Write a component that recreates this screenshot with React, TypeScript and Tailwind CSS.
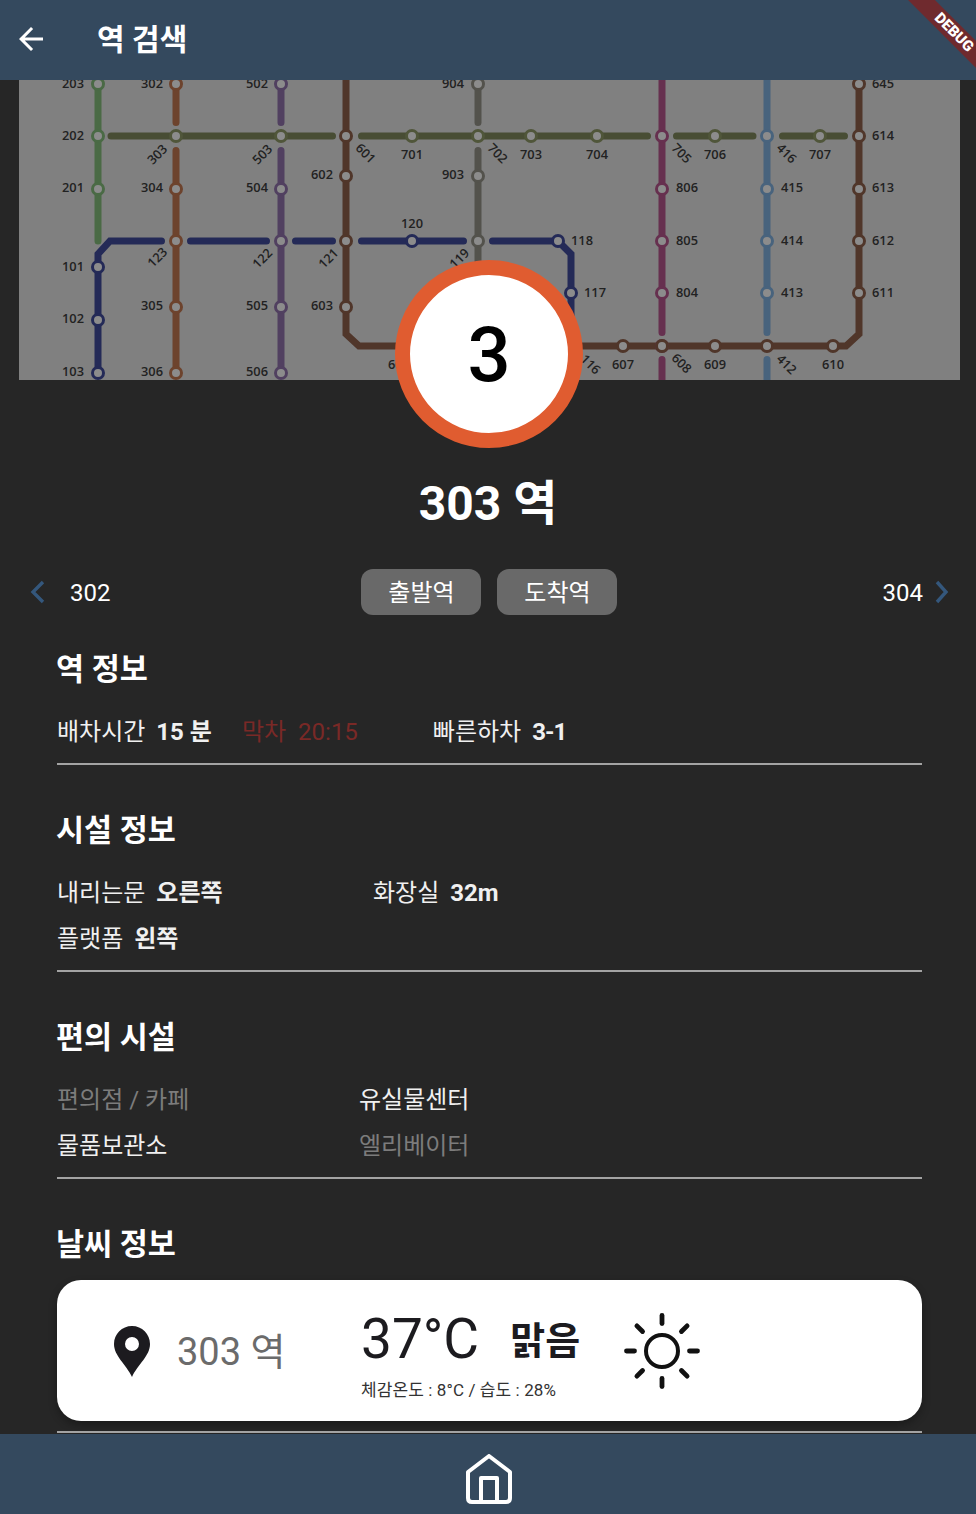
const FONT = 'font-["Roboto","Noto_Sans_CJK_KR",sans-serif]';

type Station = { x: number; y: number; c: string };
type Label = { x: number; y: number; t: string; rot?: number };

const C = {
  green: '#4a6a45',
  olive: '#484d34',
  oliveDot: '#50563a',
  orange: '#6d432d',
  purple: '#514060',
  brown: '#50362a',
  navy: '#242a57',
  gray: '#53524c',
  magenta: '#66304f',
  blue: '#48637d',
};

const segments: { d: string; c: string }[] = [
  { d: 'M98 76V241', c: C.green },
  { d: 'M176 76V122.500M176 150.500V373', c: C.orange },
  { d: 'M281 76V122.500M281 150.500V373', c: C.purple },
  { d: 'M478 76V122.500M478 150.500V300', c: C.gray },
  { d: 'M662 76V332.500M662 359.500V384', c: C.magenta },
  { d: 'M767 76V332.500M767 359.500V384', c: C.blue },
  { d: 'M346 76V334L359 346H846L859 334V76', c: C.brown },
  { d: 'M111 136H332.500M361.500 136H647.500M676.500 136H753M782.500 136H844.500', c: C.olive },
  { d: 'M98 373V254L110 241H161.500M190.500 241H266.500M295.500 241H332.500M361.500 241H463.500M492.500 241H558L571 254V320', c: C.navy },
];

const stations: Station[] = [
  ...[84, 136, 189].map((y) => ({ x: 98, y, c: C.green })),
  ...[267, 320, 373].map((y) => ({ x: 98, y, c: C.navy })),
  ...[84, 189, 241, 307, 373].map((y) => ({ x: 176, y, c: C.orange })),
  { x: 176, y: 136, c: C.oliveDot },
  ...[84, 189, 241, 307, 373].map((y) => ({ x: 281, y, c: C.purple })),
  { x: 281, y: 136, c: C.oliveDot },
  ...[136, 176, 241, 307].map((y) => ({ x: 346, y, c: C.brown })),
  ...[412, 531, 597, 715, 820].map((x) => ({ x, y: 136, c: C.oliveDot })),
  { x: 478, y: 136, c: C.oliveDot },
  ...[84, 176, 241].map((y) => ({ x: 478, y, c: C.gray })),
  { x: 412, y: 241, c: C.navy },
  { x: 558, y: 241, c: C.navy },
  { x: 571, y: 293, c: C.navy },
  ...[136, 189, 241, 293, 346].map((y) => ({ x: 662, y, c: C.magenta })),
  ...[136, 189, 241, 293].map((y) => ({ x: 767, y, c: C.blue })),
  ...[623, 767, 715, 833, 662].map((x) => ({ x, y: 346, c: C.brown })),
  ...[84, 136, 189, 241, 293].map((y) => ({ x: 859, y, c: C.brown })),
];

const labels: Label[] = [
  { x: 73, y: 83, t: '203' }, { x: 73, y: 135, t: '202' }, { x: 73, y: 187, t: '201' },
  { x: 73, y: 266, t: '101' }, { x: 73, y: 318, t: '102' }, { x: 73, y: 371, t: '103' },
  { x: 152, y: 83, t: '302' }, { x: 152, y: 187, t: '304' }, { x: 152, y: 305, t: '305' }, { x: 152, y: 371, t: '306' },
  { x: 257, y: 83, t: '502' }, { x: 257, y: 187, t: '504' }, { x: 257, y: 305, t: '505' }, { x: 257, y: 371, t: '506' },
  { x: 322, y: 174, t: '602' }, { x: 322, y: 305, t: '603' },
  { x: 453, y: 83, t: '904' }, { x: 453, y: 174, t: '903' },
  { x: 412, y: 154, t: '701' }, { x: 531, y: 154, t: '703' }, { x: 597, y: 154, t: '704' },
  { x: 715, y: 154, t: '706' }, { x: 820, y: 154, t: '707' },
  { x: 412, y: 223, t: '120' },
  { x: 582, y: 240, t: '118' }, { x: 595, y: 292, t: '117' },
  { x: 687, y: 187, t: '806' }, { x: 687, y: 240, t: '805' }, { x: 687, y: 292, t: '804' },
  { x: 792, y: 187, t: '415' }, { x: 792, y: 240, t: '414' }, { x: 792, y: 292, t: '413' },
  { x: 883, y: 83, t: '645' }, { x: 883, y: 135, t: '614' }, { x: 883, y: 187, t: '613' },
  { x: 883, y: 240, t: '612' }, { x: 883, y: 292, t: '611' },
  { x: 623, y: 364, t: '607' }, { x: 715, y: 364, t: '609' }, { x: 833, y: 364, t: '610' },
  { x: 157, y: 154, t: '303', rot: -45 }, { x: 262, y: 154, t: '503', rot: -45 },
  { x: 157, y: 257, t: '123', rot: -45 }, { x: 262, y: 258, t: '122', rot: -45 },
  { x: 328, y: 258, t: '121', rot: -45 }, { x: 459, y: 258, t: '119', rot: -45 },
  { x: 366, y: 153, t: '601', rot: 45 }, { x: 498, y: 153, t: '702', rot: 45 },
  { x: 682, y: 153, t: '705', rot: 45 }, { x: 787, y: 153, t: '416', rot: 45 },
  { x: 682, y: 363, t: '608', rot: 45 }, { x: 787, y: 364, t: '412', rot: 45 },
  { x: 591, y: 364, t: '116', rot: 45 },
  { x: 399, y: 364, t: '606' },
];

function SubwayMap() {
  return (
    <svg viewBox="19 80 941 300" className="block w-[941px] h-[300px]">
      <rect x="19" y="80" width="941" height="300" fill="#808080" />
      {segments.map((s, i) => (
        <path key={i} d={s.d} fill="none" stroke={s.c} strokeWidth="7" strokeLinecap="round" strokeLinejoin="miter" />
      ))}
      {stations.map((s, i) => (
        <circle key={i} cx={s.x} cy={s.y} r="5.5" fill="#8c8c8c" stroke={s.c} strokeWidth="3" />
      ))}
      {labels.map((l) => (
        <text
          key={l.t}
          x={l.x}
          y={l.y}
          textAnchor="middle"
          dominantBaseline="central"
          fontFamily="'Open Sans', sans-serif"
          fontWeight="600"
          fontSize="12.800"
          fill="#222222"
          transform={l.rot ? `rotate(${l.rot} ${l.x} ${l.y})` : undefined}
        >
          {l.t}
        </text>
      ))}
    </svg>
  );
}

function Divider() {
  return <div className="h-[2px] bg-[#a3a3a3] mt-[8px]" />;
}

function SectionTitle({ children }: { children: React.ReactNode }) {
  return <h2 className="h-[40px] leading-[44px] text-[30.500px] font-bold text-white -ml-[1px]">{children}</h2>;
}

function Info({ label, value, tight }: { label: string; value: string; tight?: boolean }) {
  return (
    <div className="flex gap-[11px]">
      <span>{label}</span>
      <span className={tight ? 'font-bold tracking-[-1px]' : 'font-bold'}>{value}</span>
    </div>
  );
}

function Sun() {
  const rays = [0, 45, 90, 135, 180, 225, 270, 315];
  return (
    <svg width="78" height="78" viewBox="-39 -39 78 78" className="block">
      <circle r="16" fill="none" stroke="#111" strokeWidth="4" />
      {rays.map((r) => (
        <line key={r} x1="0" y1="-27.500" x2="0" y2="-35.500" stroke="#111" strokeWidth="4.800" strokeLinecap="round" transform={`rotate(${r})`} />
      ))}
    </svg>
  );
}

export default function App() {
  return (
    <div className={`${FONT} relative flex flex-col h-[1514px] w-[976px] overflow-hidden bg-[#262626] text-[24px] text-[#f0f0f0]`}>
      <header className="relative z-20 flex items-center h-[80px] shrink-0 bg-[#34495e] pl-[13px] pb-[2px]">
        <svg width="36" height="36" viewBox="0 0 24 24" fill="#fff">
          <path d="M20 11H7.830l5.590-5.590L12 4l-8 8 8 8 1.410-1.410L7.830 13H20v-2z" />
        </svg>
        <h1 className="ml-[48px] text-[30px] font-bold text-white">역 검색</h1>
      </header>

      <div className="absolute z-30 top-[22.500px] right-[-38px] w-[120px] h-[19px] rotate-45 bg-[#6f2a2e] flex items-center justify-center text-[15px] leading-[19px] font-black text-white">
        DEBUG
      </div>

      <main className="flex-1 overflow-hidden">
        <div className="mx-[19px]">
          <SubwayMap />
        </div>

        <div className="relative z-10 mt-[-120px] ml-[395px] w-[188px] h-[188px] rounded-full bg-white border-[15px] border-[#e05c30] flex items-center justify-center pt-[2px] text-[76px] font-medium text-black">
          3
        </div>

        <div className="mt-[26px] h-[56px] leading-[60px] text-center text-[48px] font-bold text-white">303 역</div>

        <div className="relative mt-[39px] h-[46px] flex items-center">
          <svg width="15" height="24" viewBox="0 0 15 24" className="ml-[30px]" fill="none" stroke="#34577c" strokeWidth="3.400">
            <path d="M13 2L3 12L13 22" />
          </svg>
          <span className="ml-[25px] pt-[2px] text-white">302</span>
          <div className="flex gap-[16px] ml-[251px]">
            <button className="w-[120px] h-[46px] pt-[2px] rounded-[12px] bg-[#696969] text-white">출발역</button>
            <button className="w-[120px] h-[46px] pt-[2px] rounded-[12px] bg-[#696969] text-white">도착역</button>
          </div>
          <span className="ml-auto pt-[2px] text-white">304</span>
          <svg width="14" height="24" viewBox="0 0 14 24" className="ml-[12px] mr-[27px]" fill="none" stroke="#34577c" strokeWidth="3.400">
            <path d="M2 2L11 12L2 22" />
          </svg>
        </div>

        <div className="mx-[57px] w-[865px] mt-[33px]">
          <section>
            <SectionTitle>역 정보</SectionTitle>
            <div className="mt-[21px] h-[46px] flex items-center">
              <Info label="배차시간" value="15 분" />
              <div className="flex gap-[12px] ml-[30px] text-[#7a2926]">
                <span>막차</span>
                <span>20:15</span>
              </div>
              <div className="ml-[75px]">
                <Info label="빠른하차" value="3-1" tight />
              </div>
            </div>
            <Divider />
          </section>

          <section className="mt-[44px]">
            <SectionTitle>시설 정보</SectionTitle>
            <div className="mt-[21px] grid grid-cols-[316px_1fr] auto-rows-[46px] items-center">
              <Info label="내리는문" value="오른쪽" />
              <Info label="화장실" value="32m" />
              <Info label="플랫폼" value="왼쪽" />
            </div>
            <Divider />
          </section>

          <section className="mt-[44px]">
            <SectionTitle>편의 시설</SectionTitle>
            <div className="mt-[21px] grid grid-cols-[302px_1fr] auto-rows-[46px] items-center">
              <span className="text-[#7c7c7c]">편의점 / 카페</span>
              <span>유실물센터</span>
              <span>물품보관소</span>
              <span className="text-[#7c7c7c]">엘리베이터</span>
            </div>
            <Divider />
          </section>

          <section className="mt-[44px]">
            <SectionTitle>날씨 정보</SectionTitle>
            <div className="mt-[17px] h-[141px] rounded-[24px] bg-white shadow-[0_4px_8px_rgba(0,0,0,0.3)] flex items-center text-[#1c1b1f]">
              <svg width="36" height="51" viewBox="0 0 36 51" className="ml-[57px] mt-[1px]">
                <path
                  fill="#1c1b1f"
                  fillRule="evenodd"
                  d="M18 0C8 0 0 8 0 18C0 30 12 38 18 51C24 38 36 30 36 18C36 8 28 0 18 0ZM18 11A7 7 0 1 1 18 25A7 7 0 1 1 18 11Z"
                />
              </svg>
              <span className="ml-[27px] w-[184px] pt-[3px] text-[38px] text-[#6b6b6b]">303 역</span>
              <div className="flex flex-col">
                <div className="flex items-center h-[74px]">
                  <span className="text-[55px] leading-[60px]">37°C</span>
                  <span className="ml-[31px] pt-[5px] text-[38px] font-bold">맑음</span>
                </div>
                <span className="mt-[4px] text-[17px] leading-[20px] tracking-[0.100px] text-[#333]">체감온도 : 8°C / 습도 : 28%</span>
              </div>
              <div className="ml-[43px]">
                <Sun />
              </div>
            </div>
            <div className="h-[2px] bg-[#a3a3a3] mt-[10px]" />
          </section>
        </div>
      </main>

      <footer className="relative z-20 h-[80px] shrink-0 bg-[#34495e] flex justify-center">
        <svg width="46" height="50" viewBox="0 0 46 50" className="mt-[20px] ml-[2px]" fill="none" stroke="#fff" strokeWidth="4" strokeLinejoin="round">
          <path d="M23 2L44 18V44Q44 48 40 48H6Q2 48 2 44V18Z" />
          <path d="M15 48V24H31V48" />
        </svg>
      </footer>
    </div>
  );
}
